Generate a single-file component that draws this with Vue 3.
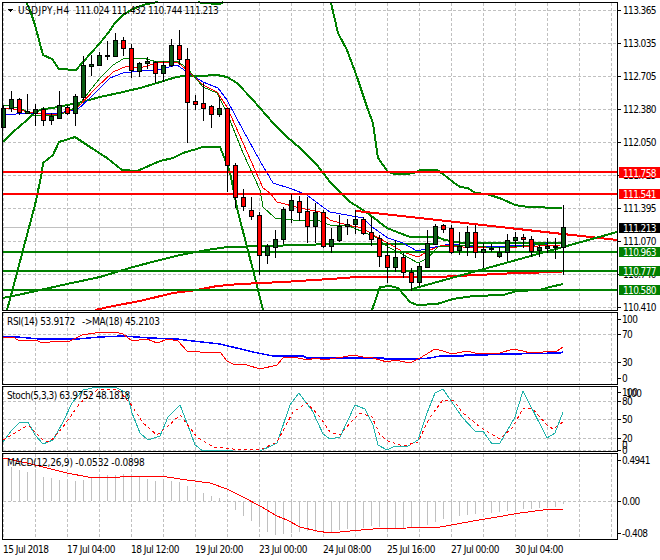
<template>
  <div class="page">
    <!-- price pane -->
    <svg class="pane" width="660" height="309" viewBox="0 2 660 309">
      <path class="grid" :d="gridPath(mainGrid, 3, 310)" />
      <line class="now" x1="3" x2="617" y1="227.5" y2="227.5" />
      <path v-for="(b, i) in bands" :key="'b' + i" class="band" :d="toPath(b)" />
      <path class="thick-red" :d="toPath(longRed)" />
      <path class="thin" stroke="#0000ff" :d="toPath(maBlue)" />
      <path class="thin" stroke="#ff0000" :d="toPath(maRed)" />
      <path class="thin" stroke="#008000" :d="toPath(maGreen)" />
      <line v-for="y in [252, 271, 290]" :key="y" class="hl green" x1="3" x2="617" :y1="y" :y2="y" />
      <line v-for="y in [172, 194]" :key="y" class="hl red" x1="3" x2="617" :y1="y" :y2="y" />
      <line class="hl red" x1="356" y1="211" x2="617" y2="240" />
      <line class="hl green" x1="412" y1="289" x2="617" y2="232" />
      <g v-for="c in candles" :key="c[0]">
        <line class="wick" :x1="c[0] + 0.5" :x2="c[0] + 0.5" :y1="c[1]" :y2="c[4]" />
        <rect class="body" :class="c[5]" :x="c[0] - 1.5" :y="c[2] + 0.5" width="4" :height="c[3] - c[2]" />
      </g>
      <path class="dn" d="M7 9h6l-3 3z" />
      <text class="lbl symbol" x="18" y="14">USDJPY,H4</text>
      <text class="lbl head" x="75" y="14">111.024 111.432 110.744 111.213</text>
      <path class="frame" d="M2.5 2.5H617.5V310.5H2.5Z" />
      <g v-for="l in mainAxis" :key="l[1]">
        <line class="tick" x1="618" x2="621" :y1="l[0] + 0.5" :y2="l[0] + 0.5" />
        <text class="lbl" x="623" :y="l[0] + 4">{{ l[1] }}</text>
      </g>
      <g v-for="t in tags" :key="t.text">
        <rect :class="t.cls" x="619" :y="t.y" width="41" :height="t.h" />
        <text class="lbl tagtext" x="623" :y="t.y + t.h - 1.5">{{ t.text }}</text>
      </g>
    </svg>

    <!-- RSI -->
    <svg class="pane rsi" width="660" height="73" viewBox="0 312 660 73">
      <path class="grid" :d="gridPath([334, 362], 313, 384)" />
      <path class="mid-blue" :d="toPath(rsiBlue)" />
      <path class="thin" stroke="#ff0000" :d="toPath(rsiRed)" />
      <text class="lbl wide" x="7" y="325">RSI(14) 53.9172</text>
      <text class="lbl wide" x="82" y="325">-&gt;MA(18) 45.2103</text>
      <path class="frame" d="M2.5 312.5H617.5V384.5H2.5Z" />
      <g v-for="l in rsiAxis" :key="l[1]">
        <line class="tick" x1="618" x2="621" :y1="l[0] + 0.5" :y2="l[0] + 0.5" />
        <text class="lbl" x="622" :y="l[0] + 4">{{ l[1] }}</text>
      </g>
    </svg>

    <!-- Stochastic -->
    <svg class="pane stoch" width="660" height="66" viewBox="0 386 660 66">
      <path class="grid" :d="gridPath([401, 419, 438, 450], 387, 451)" />
      <path class="thin" stroke="#20b2aa" :d="toPath(stochMain)" />
      <path class="thin dashed" stroke="#ff0000" :d="toPath(stochSig)" />
      <text class="lbl legend" x="7" y="399">Stoch(5,3,3) 63.9752 48.1818</text>
      <path class="frame" d="M2.5 386.5H617.5V451.5H2.5Z" />
      <g v-for="l in stochAxis" :key="l[0] + l[1]">
        <line v-if="l[3]" class="tick" x1="618" x2="621" :y1="l[0] + 0.5" :y2="l[0] + 0.5" />
        <text class="lbl" :x="l[2]" :y="l[0] + 4">{{ l[1] }}</text>
      </g>
    </svg>

    <!-- MACD -->
    <svg class="pane macd" width="660" height="87" viewBox="0 453 660 87">
      <path class="grid" :d="gridPath([501], 454, 539)" />
      <path class="hist" :d="histPath" />
      <path class="thin" stroke="#ff0000" :d="toPath(macdSig)" />
      <text class="lbl macd-legend" x="7" y="466">MACD(12,26,9) -0.0532 -0.0898</text>
      <path class="frame" d="M2.5 453.5H617.5V539.5H2.5Z" />
      <g v-for="l in macdAxis" :key="l[1]">
        <line class="tick" x1="618" x2="621" :y1="l[0] + 0.5" :y2="l[0] + 0.5" />
        <text class="lbl" x="622" :y="l[0] + 4">{{ l[1] }}</text>
      </g>
    </svg>

    <!-- time axis -->
    <div class="times">
      <div v-for="t in times" :key="t" class="time">{{ t }}</div>
    </div>
  </div>
</template>

<script setup>
const vGrid = []
for (let x = 3; x < 617; x += 32) vGrid.push(x)

const gridPath = (rows, top, bottom) => {
  let d = ''
  rows.forEach(y => { d += `M3 ${y + 0.5}H617` })
  vGrid.forEach(x => { d += `M${x + 0.5} ${top}V${bottom}` })
  return d
}

const toPath = pts => 'M' + pts.map(p => p.join(' ')).join('L')

const mainGrid = [10, 43, 76, 109, 142, 175, 208, 241, 274, 307]

const mainAxis = [
  [10, '113.365'], [43, '113.035'], [76, '112.705'], [109, '112.380'], [142, '112.050'],
  [175, '111.725'], [208, '111.395'], [241, '111.070'], [274, '110.740'], [307, '110.410']
]

const tags = [
  { text: '111.758', y: 167, h: 11, cls: 'red-bg' },
  { text: '111.541', y: 189, h: 10, cls: 'red-bg' },
  { text: '111.213', y: 223, h: 10, cls: 'black-bg' },
  { text: '110.963', y: 247, h: 10, cls: 'green-bg' },
  { text: '110.777', y: 266, h: 10, cls: 'green-bg' },
  { text: '110.580', y: 285, h: 10, cls: 'green-bg' }
]

const rsiAxis = [[319, '100'], [334, '70'], [362, '30'], [378, '0']]
const stochAxis = [
  [392, '100', 622, true], [393, '100', 626, false], [401, '80', 622, true], [419, '50', 622, true],
  [438, '20', 622, true], [445, '0', 622, false], [450, '0', 622, true]
]
const macdAxis = [[460, '0.4941'], [501, '0.00'], [533, '-0.408']]

const times = ['15 Jul 2018', '17 Jul 04:00', '18 Jul 12:00', '19 Jul 20:00', '23 Jul 00:00', '24 Jul 08:00', '25 Jul 16:00', '27 Jul 00:00', '30 Jul 04:00']

// x, high, body top, body bottom, low, colour
const g = 'up'
const r = 'down'
const candles = [
  [3, 105, 108, 127, 127, g], [11, 91, 99, 108, 112, g], [19, 98, 99, 112, 115, r], [27, 94, 111, 113, 113, g],
  [35, 104, 109, 113, 126, g], [43, 107, 109, 120, 126, r], [51, 113, 116, 120, 125, g], [59, 91, 105, 118, 118, g],
  [67, 105, 107, 113, 115, r], [75, 94, 96, 113, 126, g], [83, 56, 65, 97, 100, g], [91, 55, 64, 66, 76, g],
  [99, 52, 55, 65, 66, g], [107, 41, 55, 56, 60, g], [115, 33, 40, 56, 56, g], [123, 37, 40, 48, 56, r],
  [131, 44, 48, 70, 78, r], [139, 62, 63, 71, 77, g], [147, 57, 61, 63, 69, g], [155, 61, 62, 73, 83, r],
  [163, 61, 65, 73, 82, g], [171, 39, 45, 65, 67, g], [179, 30, 45, 59, 65, r], [187, 48, 59, 102, 143, r],
  [195, 95, 101, 104, 110, r], [203, 83, 103, 108, 121, r], [211, 105, 106, 114, 128, r], [219, 97, 108, 114, 117, g],
  [227, 108, 108, 165, 192, r], [235, 163, 165, 197, 208, r], [243, 189, 197, 206, 211, r], [251, 197, 210, 216, 220, r],
  [259, 212, 215, 255, 275, r], [267, 244, 246, 255, 264, g], [275, 230, 239, 247, 258, g], [283, 207, 209, 239, 244, g],
  [291, 194, 200, 210, 223, g], [299, 196, 201, 212, 221, r], [307, 197, 211, 226, 243, r], [315, 203, 212, 226, 243, g],
  [323, 210, 212, 246, 248, r], [331, 228, 239, 246, 253, g], [339, 215, 226, 240, 242, g], [347, 219, 224, 226, 235, g],
  [355, 210, 219, 224, 234, g], [363, 217, 219, 233, 235, r], [371, 217, 232, 239, 246, r], [379, 235, 238, 256, 267, r],
  [387, 242, 255, 267, 283, r], [395, 240, 257, 267, 272, g], [403, 253, 257, 272, 278, r], [411, 268, 272, 282, 291, r],
  [419, 263, 266, 282, 286, g], [427, 230, 243, 267, 268, g], [435, 224, 226, 244, 245, g], [443, 224, 225, 229, 233, r],
  [451, 225, 228, 252, 254, r], [459, 232, 246, 250, 255, g], [467, 226, 232, 247, 256, g], [475, 225, 232, 252, 258, r],
  [483, 243, 249, 252, 268, g], [491, 244, 248, 249, 252, g], [499, 247, 252, 256, 258, g], [507, 234, 240, 252, 261, g],
  [515, 232, 237, 240, 247, g], [523, 234, 237, 239, 248, r], [531, 236, 239, 251, 257, r], [539, 245, 247, 250, 257, g],
  [547, 238, 246, 248, 253, g], [555, 238, 246, 247, 259, g], [563, 205, 227, 247, 275, g]
]

const bands = [
  // upper band, first stretch
  [[26, 2], [30, 10], [35, 25], [43, 55], [52, 59], [59, 69], [76, 70], [83, 62], [100, 43], [108, 33], [115, 23], [123, 15], [131, 10], [140, 6], [147, 4], [158, 2]],
  [[198, 2], [202, 3], [220, 4], [223, 2]],
  // upper band, second stretch
  [[331, 3], [338, 33], [347, 50], [357, 77], [367, 107], [373, 123], [378, 158], [388, 172], [395, 174], [407, 174], [417, 172], [420, 170], [437, 170], [443, 174], [453, 182], [460, 187], [468, 188], [475, 193], [487, 194], [502, 199], [515, 205], [528, 207], [562, 208]],
  // middle band
  [[3, 142], [13, 132], [27, 120], [35, 112], [43, 109], [53, 108], [67, 105], [78, 103], [100, 97], [123, 92], [140, 88], [157, 83], [173, 78], [182, 76], [200, 76], [217, 75], [227, 77], [237, 83], [253, 100], [273, 123], [287, 137], [300, 148], [317, 165], [330, 182], [340, 192], [350, 202], [360, 208], [370, 215], [387, 228], [397, 232], [410, 237], [437, 237], [445, 240], [463, 243], [562, 243]],
  // lower band
  [[7, 310], [13, 288], [23, 250], [35, 205], [42, 172], [43, 163], [53, 155], [59, 142], [75, 137], [90, 147], [107, 158], [122, 170], [137, 171], [160, 161], [173, 158], [183, 153], [203, 147], [220, 147], [230, 172], [237, 208], [247, 247], [253, 270], [263, 310]],
  [[372, 310], [380, 287], [390, 286], [398, 288], [410, 302], [417, 305], [437, 304], [453, 299], [473, 296], [503, 295], [517, 291], [540, 290], [550, 287], [563, 284]],
  // long green average
  [[3, 298], [27, 293], [67, 284], [100, 277], [133, 267], [160, 260], [180, 255], [207, 250], [227, 247], [267, 246], [333, 244], [437, 244]]
]

const longRed = [[95, 310], [113, 306], [140, 301], [173, 293], [197, 290], [217, 286], [240, 284], [283, 282], [330, 279], [357, 277], [437, 277], [477, 275], [517, 273], [562, 272]]

const maBlue = [[6, 115], [27, 113], [57, 113], [77, 110], [90, 98], [110, 78], [123, 73], [140, 71], [157, 70], [177, 65], [187, 72], [203, 82], [218, 88], [227, 100], [243, 130], [260, 161], [273, 183], [292, 189], [307, 195], [320, 205], [330, 212], [347, 215], [363, 218], [372, 227], [388, 238], [403, 243], [417, 251], [430, 248], [450, 244], [470, 246], [490, 247], [510, 246], [530, 245], [560, 243]]
const maRed = [[6, 108], [20, 110], [33, 113], [57, 115], [77, 108], [97, 87], [113, 72], [127, 66], [140, 68], [157, 63], [177, 62], [187, 70], [203, 85], [217, 92], [227, 107], [243, 143], [263, 188], [270, 193], [277, 202], [300, 208], [320, 212], [330, 220], [347, 225], [363, 228], [373, 235], [388, 243], [403, 252], [418, 257], [430, 250], [443, 245], [463, 247], [490, 248], [517, 247], [560, 245]]
const maGreen = [[3, 105], [20, 108], [33, 115], [57, 116], [77, 107], [100, 78], [113, 65], [123, 59], [143, 58], [157, 62], [177, 61], [187, 68], [203, 87], [217, 93], [227, 113], [243, 153], [260, 190], [263, 207], [275, 218], [293, 220], [317, 220], [330, 225], [347, 225], [363, 232], [377, 238], [388, 247], [400, 253], [418, 263], [428, 258], [438, 247], [463, 245], [497, 248], [560, 243]]

const rsiBlue = [[3, 337], [17, 337], [40, 339], [77, 339], [100, 337], [123, 336], [150, 338], [177, 339], [193, 341], [220, 344], [253, 352], [273, 356], [303, 356], [307, 358], [383, 358], [385, 359], [417, 359], [430, 358], [440, 356], [463, 356], [465, 355], [487, 355], [487, 354], [510, 354], [560, 353], [563, 352]]
const rsiRed = [[3, 338], [13, 337], [18, 340], [35, 340], [43, 343], [57, 341], [68, 342], [82, 335], [95, 333], [115, 332], [123, 334], [132, 341], [147, 339], [157, 343], [168, 339], [178, 341], [187, 351], [200, 352], [208, 353], [220, 352], [227, 361], [233, 364], [247, 365], [260, 369], [277, 365], [283, 358], [293, 357], [308, 360], [315, 358], [325, 360], [330, 359], [343, 357], [353, 355], [363, 357], [373, 358], [387, 362], [395, 360], [410, 363], [420, 358], [435, 349], [443, 351], [452, 354], [467, 351], [475, 353], [487, 353], [500, 353], [513, 349], [523, 351], [530, 353], [543, 352], [557, 351], [563, 347]]

const stochMain = [[3, 442], [12, 430], [20, 422], [28, 422], [35, 435], [43, 444], [53, 440], [63, 422], [72, 403], [83, 390], [97, 387], [117, 388], [127, 393], [132, 413], [140, 433], [148, 440], [160, 436], [168, 417], [180, 405], [187, 423], [195, 445], [203, 451], [213, 450], [233, 451], [260, 451], [275, 444], [277, 443], [290, 405], [299, 393], [313, 412], [323, 434], [330, 439], [340, 437], [355, 405], [365, 409], [373, 425], [378, 445], [387, 450], [395, 446], [408, 446], [418, 440], [427, 413], [435, 393], [443, 389], [462, 417], [475, 431], [483, 431], [492, 444], [500, 443], [515, 417], [523, 391], [547, 438], [555, 433], [563, 412]]
const stochSig = [[3, 440], [17, 432], [28, 425], [43, 440], [50, 442], [63, 427], [80, 403], [97, 390], [117, 389], [130, 403], [143, 423], [157, 435], [167, 427], [180, 415], [197, 437], [213, 447], [233, 449], [260, 450], [277, 442], [293, 412], [307, 403], [320, 417], [330, 432], [340, 435], [350, 423], [360, 413], [372, 417], [380, 435], [388, 441], [403, 446], [418, 442], [430, 417], [443, 400], [453, 400], [463, 413], [480, 427], [500, 439], [513, 427], [523, 408], [532, 408], [547, 425], [553, 429], [563, 422]]

const macdSig = [[3, 458], [27, 463], [43, 467], [67, 473], [88, 477], [107, 478], [120, 477], [140, 476], [167, 477], [187, 480], [210, 483], [227, 489], [243, 497], [260, 506], [277, 516], [287, 520], [300, 527], [317, 531], [330, 533], [350, 531], [373, 529], [407, 528], [440, 527], [457, 524], [473, 521], [497, 517], [520, 513], [543, 510], [563, 509]]

// histogram ends, one bar every 8px from x=3
const hist = [
  458, 467, 470, 472, 472, 477, 478, 480, 482, 481, 480, 477, 476, 475, 475, 474, 476, 477, 479, 481, 481, 481, 482, 486, 489, 493, 496, 498, 501,
  510, 516, 521, 526, 532, 535, 534, 533, 532, 531, 532, 532, 532, 530, 529, 529, 528, 526, 527, 529, 529, 528, 528, 526, 525, 522, 519, 519, 516,
  515, 514, 512, 513, 512, 511, 510, 509, 509, 508, 508, 507, 504
]
const histPath = hist.map((y, i) => `M${3 + i * 8 + 0.5} 501V${y}`).join('')
</script>

<style scoped>
.page {
  width: 660px;
  height: 560px;
  padding-top: 2px;
  box-sizing: border-box;
  display: flex;
  flex-direction: column;
  gap: 1px;
  background: #fff;
  overflow: hidden;
}

.pane {
  display: block;
  flex: none;
  overflow: visible;
  shape-rendering: crispEdges;
}

.grid {
  fill: none;
  stroke: #c0c0c0;
  stroke-width: 1;
  stroke-dasharray: 3 2;
}

.now {
  stroke: #c0c0c0;
  stroke-width: 1;
}

.band {
  fill: none;
  stroke: #008000;
  stroke-width: 2;
}

.thick-red {
  fill: none;
  stroke: #ff0000;
  stroke-width: 2;
}

.thin {
  fill: none;
  stroke-width: 1;
}

.mid-blue {
  fill: none;
  stroke: #0000ff;
  stroke-width: 1.5;
}

.dashed {
  stroke-dasharray: 3 3;
}

.hl {
  stroke-width: 2;
}

.hl.red {
  stroke: #ff0000;
}

.hl.green {
  stroke: #008000;
}

.wick {
  stroke: #000;
  stroke-width: 1;
}

.body {
  stroke: #000;
  stroke-width: 1;
}

.body.up {
  fill: #0a5c14;
}

.body.down {
  fill: #ff0000;
}

.frame {
  fill: none;
  stroke: #000;
  stroke-width: 1;
}

.tick {
  stroke: #000;
  stroke-width: 1;
}

.dn {
  fill: #000;
}

.lbl {
  font-family: "DejaVu Sans Condensed", "DejaVu Sans", sans-serif;
  font-stretch: condensed;
  font-size: 10px;
  letter-spacing: -0.6px;
  fill: #000;
}

.lbl.symbol {
  letter-spacing: 0.4px;
}

.lbl.head {
  letter-spacing: -0.45px;
}

.lbl.legend {
  letter-spacing: -0.45px;
}

.lbl.wide {
  letter-spacing: -0.35px;
}

.lbl.macd-legend {
  letter-spacing: -0.2px;
}

.tagtext {
  fill: #fff;
}

.red-bg {
  fill: #ff0000;
}

.black-bg {
  fill: #000;
}

.green-bg {
  fill: #008000;
}

.hist {
  fill: none;
  stroke: #c0c0c0;
  stroke-width: 1;
}

.times {
  display: flex;
  padding: 3px 0 0 3px;
}

.time {
  width: 64px;
  flex: none;
  font-family: "DejaVu Sans Condensed", "DejaVu Sans", sans-serif;
  font-stretch: condensed;
  font-size: 10px;
  letter-spacing: -0.5px;
  line-height: 12px;
  color: #000;
  white-space: nowrap;
}
</style>
